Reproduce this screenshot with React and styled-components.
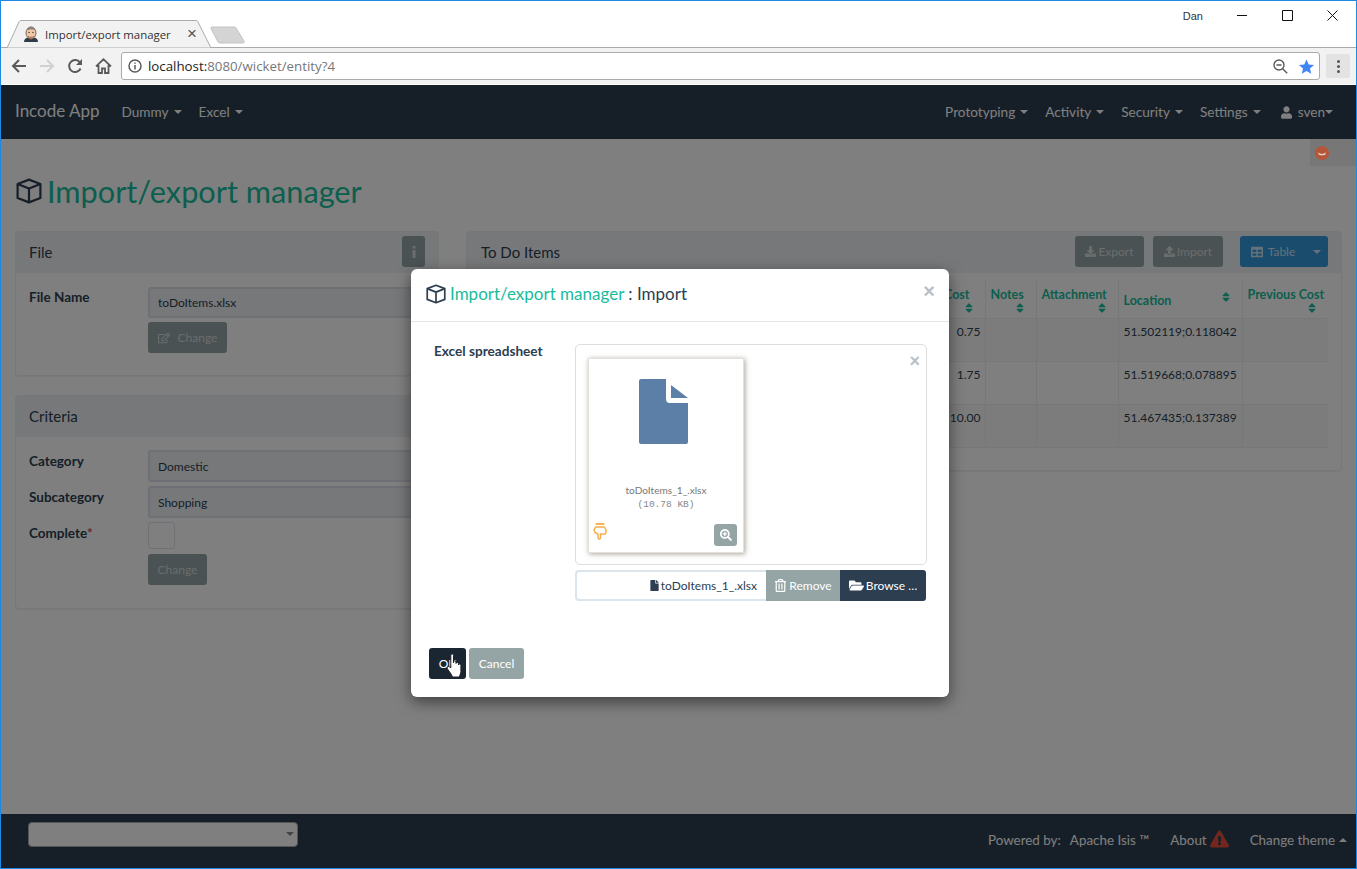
import React from "react";
import styled, { createGlobalStyle } from "styled-components";
import {
	FaDownload,
	FaExclamationTriangle,
	FaFile,
	FaFolderOpen,
	FaRegEdit,
	FaRegTrashAlt,
	FaSearchPlus,
	FaSort,
	FaTable,
	FaUpload,
	FaUser,
} from "react-icons/fa";

const GlobalStyle = createGlobalStyle`
	html, body {
		margin: 0;
		padding: 0;
		overflow: hidden;
		background: #fff;
	}
	* {
		box-sizing: border-box;
	}
`;

const Cube = ({ size = 26 }) => (
	<svg width={size} height={size} viewBox="0 0 26 26" fill="none" stroke="currentColor" strokeWidth="2.2" strokeLinejoin="round">
		<path d="M13 1.6 24.4 6v14L13 24.4 1.6 20V6z" />
		<path d="M1.6 6 13 10.6 24.4 6M13 10.6v13.8" />
	</svg>
);

const Favicon = () => (
	<svg width="16" height="17" viewBox="0 0 16 17">
		<path d="M1 16c0-3 2-4 4-4.500h6c2 .5 4 1.500 4 4.500z" fill="#2f3a4a" />
		<path d="M6.500 12.500 8 14l1.500-1.500L8 12z" fill="#c0392b" />
		<ellipse cx="8" cy="7" rx="5" ry="6" fill="#f0c9a8" stroke="#6b4a35" strokeWidth=".8" />
		<path d="M3.500 5C4 2 6 .8 8 .8s4 1.200 4.500 4C11 3 5 3 3.500 5z" fill="#8b8178" />
		<path d="M5 10.500c2 1.200 4 1.200 6 0" stroke="#6b4a35" fill="none" strokeWidth=".8" />
		<circle cx="6" cy="6.500" r=".7" fill="#333" />
		<circle cx="10" cy="6.500" r=".7" fill="#333" />
	</svg>
);

const ArrowLeft = ({ color }) => (
	<svg width="16" height="16" viewBox="0 0 16 16" fill="none" stroke={color} strokeWidth="2">
		<path d="M15 8H2M8 2 2 8l6 6" />
	</svg>
);

const ArrowRight = ({ color }) => (
	<svg width="16" height="16" viewBox="0 0 16 16" fill="none" stroke={color} strokeWidth="2">
		<path d="M1 8h13M8 2l6 6-6 6" />
	</svg>
);

const Reload = () => (
	<svg width="16" height="16" viewBox="0 0 16 16" fill="none" stroke="#5a5a5a" strokeWidth="2">
		<path d="M13.600 10.500A6 6 0 1 1 13 4.500" />
		<path d="M15 1v6H9z" fill="#5a5a5a" stroke="none" />
	</svg>
);

const Home = () => (
	<svg width="17" height="16" viewBox="0 0 17 16" fill="none" stroke="#5a5a5a" strokeWidth="1.800">
		<path d="M1 8.300 8.500 1.300 16 8.300M3.500 7v8h3.500v-4.500h3V15h3.500V7" />
	</svg>
);

const InfoCircle = () => (
	<svg width="14" height="14" viewBox="0 0 14 14" fill="none" stroke="#5a5a5a" strokeWidth="1.500">
		<circle cx="7" cy="7" r="6" />
		<path d="M7 6v4.500M7 3.400v1.400" />
	</svg>
);

const ZoomOut = () => (
	<svg width="15" height="15" viewBox="0 0 15 15" fill="none" stroke="#5a5a5a" strokeWidth="1.400">
		<circle cx="6" cy="6" r="5" />
		<path d="M3.500 6h5M9.700 9.700l4.500 4.500" />
	</svg>
);

const Star = () => (
	<svg width="15" height="15" viewBox="0 0 15 15">
		<path d="M7.500.4 9.700 5.400l5.300.5-4 3.600 1.200 5.300-4.700-2.800-4.700 2.800L4 9.500 0 5.900l5.300-.5z" fill="#4285f4" />
	</svg>
);

const HandCursor = () => (
	<svg width="18" height="25" viewBox="0 0 18 25">
		<path
			d="M4.800 15V2.500c0-2 2.700-2 2.700 0V10V9c0-1.500 2.500-1.500 2.500 0v1.500c0-1.500 2.500-1.500 2.500 0V12c0-1.300 2.400-1.300 2.400.5v6c0 2-1 3-1.500 5.500H6.500C5.500 21 3.500 19 1.500 16c-1.200-2 1-3.500 2.300-2z"
			fill="#fff"
			stroke="#222"
			strokeWidth="1"
		/>
	</svg>
);

const BigFile = () => (
	<svg width="49" height="65" viewBox="0 0 49 65">
		<path d="M2 0h25v20a4 4 0 0 0 4 4h18v39a2 2 0 0 1-2 2H2a2 2 0 0 1-2-2V2a2 2 0 0 1 2-2z" fill="#5b7fa6" />
		<path d="M32 6 49 19H32z" fill="#5b7fa6" />
	</svg>
);

const PointDown = () => (
	<svg width="14" height="17" viewBox="0 0 14 17" fill="none" stroke="#f5ae4a" strokeWidth="1.500" strokeLinejoin="round">
		<path d="M2.500 1h9" strokeWidth="1.800" />
		<path d="M2.500 4h9l1.500 3v2.500c0 1-.8 1.500-1.500 1.500H7.500v4c0 1.300-2.500 1.300-2.500 0v-4L2 9.500 1 7z" />
	</svg>
);

const Frame = styled.div`
	position: relative;
	display: flex;
	flex-direction: column;
	height: 100vh;
	border: 1px solid #1e88e5;
	overflow: hidden;
	font-family: "Lato", "Liberation Sans", sans-serif;
	font-size: 15px;
	color: #2c3e50;
`;

const TitleBar = styled.div`
	display: flex;
	align-items: flex-end;
	height: 46px;
	padding-left: 6px;
	background: #fff;
`;

const Tab = styled.div`
	position: relative;
	display: flex;
	align-items: center;
	width: 205px;
	height: 28px;
	margin-bottom: -1px;
	padding: 0 0 0 16px;
	gap: 6px;
	font-family: "Open Sans", "Liberation Sans", sans-serif;
	font-size: 11.4px;
	color: #333;
	z-index: 1;
`;

const TabShape = styled.svg`
	position: absolute;
	left: 0;
	top: 0;
	z-index: -1;
`;

const TabClose = styled.span`
	position: absolute;
	right: 15px;
	top: 5px;
	font-family: "Liberation Sans", sans-serif;
	font-size: 17px;
	line-height: 17px;
	color: #555;
`;

const NewTab = styled.svg`
	margin: 0 0 3px -2px;
`;

const Spacer = styled.div`
	flex: 1;
`;

const WindowControls = styled.div`
	display: flex;
	align-self: flex-start;
	align-items: center;
	height: 29px;
	padding-right: 18px;
	gap: 34px;
`;

const UserName = styled.span`
	font-family: "Liberation Sans", sans-serif;
	font-size: 11px;
	color: #333;
`;

const Toolbar = styled.div`
	display: flex;
	align-items: center;
	height: 38px;
	padding: 0 6px 0 4px;
	background: #f2f2f2;
	border-top: 1px solid #aaa;
	border-bottom: 1px solid #fff;
`;

const NavIcon = styled.span`
	display: flex;
	justify-content: center;
	width: 28px;
`;

const Omnibox = styled.div`
	display: flex;
	flex: 1;
	align-items: center;
	height: 28px;
	margin-left: 4px;
	padding: 0 5px 0 6px;
	gap: 6px;
	background: #fff;
	border: 1px solid #aaa;
	border-radius: 3px;
	font-family: "Open Sans", "Liberation Sans", sans-serif;
	font-size: 13.3px;
`;

const Host = styled.span`
	color: #222;
`;

const UrlRest = styled.span`
	margin-left: -6px;
	color: #777;
`;

const OmniActions = styled.span`
	display: flex;
	align-items: center;
	gap: 11px;
`;

const Kebab = styled.div`
	display: flex;
	flex-direction: column;
	align-items: center;
	justify-content: center;
	width: 24px;
	height: 24px;
	margin-left: 6px;
	gap: 2px;
	background: #e3e3e3;
	border-radius: 2px;
`;

const Dot = styled.i`
	width: 3px;
	height: 3px;
	border-radius: 50%;
	background: #555;
`;

const Navbar = styled.nav`
	display: flex;
	align-items: center;
	height: 54px;
	padding: 0 22px 0 14px;
	background: #2c3e50;
	color: #fff;
`;

const Brand = styled.span`
	margin: -4px 22px 0 0;
	font-size: 17px;
`;

const NavItem = styled.span`
	display: flex;
	align-items: center;
	margin-right: ${(p) => p.$gap || 17}px;
	font-size: 13.6px;
`;

const Caret = styled.i`
	width: 0;
	height: 0;
	margin-left: ${(p) => (p.$tight ? 0 : 5)}px;
	border-top: 4px solid currentColor;
	border-left: 4px solid transparent;
	border-right: 4px solid transparent;
`;

const CaretUp = styled(Caret)`
	margin-left: 4px;
	border-top: 0;
	border-bottom: 4px solid currentColor;
`;

const UserIcon = styled(FaUser)`
	width: 11px;
	height: 13px;
	margin-right: 6px;
`;

const Main = styled.main`
	position: relative;
	flex: 1;
	padding: 0 14px;
	background: #fff;
`;

const Feedback = styled.div`
	position: absolute;
	right: 0;
	top: 0;
	display: flex;
	align-items: center;
	width: 46px;
	height: 27px;
	padding-left: 5px;
	background: #eee;
`;

const Smile = styled.svg`
	position: relative;
	z-index: 2;
	display: block;
`;

const PageTitle = styled.h1`
	display: flex;
	align-items: center;
	height: 92px;
	margin: 0;
	gap: 5px;
	padding-top: 12px;
	font-size: 30.7px;
	font-weight: 400;
	color: #18bc9c;
`;

const TitleIcon = styled.span`
	display: flex;
	margin-left: 1px;
	color: #2c3e50;
`;

const Columns = styled.div`
	display: grid;
	grid-template-columns: 424px 876px;
	gap: 27px;
	align-items: start;
`;

const Stack = styled.div`
	display: flex;
	flex-direction: column;
	gap: 19px;
`;

const Panel = styled.section`
	background: #fff;
	border: 1px solid #ecf0f1;
	border-radius: 4px;
	box-shadow: 0 1px 1px rgba(0, 0, 0, 0.05);
`;

const PanelHead = styled.header`
	display: flex;
	align-items: center;
	justify-content: space-between;
	height: 41px;
	padding: 0 13px 2px ${(p) => p.$left || 13}px;
	background: #eef1f4;
	font-size: 15px;
`;

const PanelBody = styled.div`
	display: grid;
	grid-template-columns: 119px 1fr;
	row-gap: 4px;
	padding: ${(p) => p.$top}px 0 ${(p) => p.$bottom}px 13px;
`;

const Label = styled.label`
	padding-top: ${(p) => p.$top ?? 3}px;
	font-size: 13.5px;
	font-weight: 700;
`;

const Required = styled.span`
	color: #e74c3c;
`;

const Input = styled.div`
	display: flex;
	align-items: center;
	height: ${(p) => p.$h}px;
	padding-left: 8px;
	background: #ecf0f5;
	border: 2px solid #dce1ec;
	border-radius: 3px;
	font-size: 12px;
`;

const Checkbox = styled.div`
	width: 27px;
	height: 27px;
	background: #fff;
	border: 1px solid #dce4ec;
	border-radius: 3px;
`;

const Button = styled.button`
	display: inline-flex;
	align-items: center;
	justify-content: center;
	height: ${(p) => p.$h || 31}px;
	width: ${(p) => p.$w}px;
	margin-top: ${(p) => p.$mt || 0}px;
	padding: 0;
	gap: ${(p) => p.$gap ?? 2}px;
	background: ${(p) => p.$bg || "#95a5a6"};
	border: 0;
	border-radius: 3px;
	font-family: inherit;
	font-size: 12px;
	color: #fff;
`;

const Muted = styled.span`
	color: rgba(255, 255, 255, ${(p) => p.$alpha || 0.6});
	display: inline-flex;
	align-items: center;
	gap: ${(p) => p.$gap ?? 2}px;
`;

const HeadActions = styled.div`
	display: flex;
	align-items: center;
	gap: 9px;
`;

const TableGroup = styled.div`
	display: flex;
	margin-left: 8px;
`;

const TableButton = styled(Button)`
	border-radius: 3px 0 0 3px;
`;

const TableCaret = styled(Button)`
	border-radius: 0 3px 3px 0;
`;

const Table = styled.table`
	width: 847px;
	margin: 8px 0 22px 14px;
	table-layout: fixed;
	border-collapse: collapse;
	font-size: 12px;
`;

const Th = styled.th`
	height: 37px;
	padding: 7px ${(p) => p.$pad || 5}px 0 5px;
	border-left: 1px solid #ecf0f1;
	border-bottom: 1px solid #ecf0f1;
	color: #18bc9c;
	font-size: 12.5px;
	font-weight: 700;
	line-height: 13px;
	white-space: nowrap;
	text-align: ${(p) => (p.$right ? "right" : "left")};
	vertical-align: top;
	&:first-child {
		border-left: 0;
	}
`;

const SortIcon = styled(FaSort)`
	display: block;
	width: 10px;
	height: 12px;
	margin: 1px ${(p) => p.$right || 0}px 0 auto;
`;

const LocationHead = styled.div`
	display: flex;
	justify-content: space-between;
	padding-right: 6px;
	margin-top: 2px;
`;

const LocationText = styled.span`
	margin-top: 4px;
`;

const Row = styled.tr`
	background: ${(p) => (p.$odd ? "#f9f9f9" : "transparent")};
`;

const Td = styled.td`
	height: 43px;
	padding: 5px 4px 0 5px;
	border-left: 1px solid #ecf0f1;
	border-bottom: 1px solid #ecf0f1;
	text-align: ${(p) => (p.$num ? "right" : "left")};
	vertical-align: top;
	&:first-child {
		border-left: 0;
	}
`;

const Footer = styled.footer`
	display: flex;
	align-items: center;
	height: 54px;
	padding: 0 9px 2px 27px;
	background: #2c3e50;
	color: #fff;
	font-size: 13.4px;
`;

const ThemeSelect = styled.div`
	position: relative;
	width: 270px;
	height: 25px;
	margin-top: -11px;
	background: #fff;
	border: 1px solid #aaa;
	border-radius: 4px;
`;

const SelectArrow = styled(Caret)`
	position: absolute;
	right: 3px;
	top: 9px;
	color: #888;
`;

const FooterText = styled.span`
	display: flex;
	align-items: center;
	margin-left: ${(p) => p.$gap || 0}px;
`;

const WarnIcon = styled(FaExclamationTriangle)`
	width: 19px;
	height: 18px;
	margin: -3px 0 0 3px;
	color: #e74c3c;
`;

const Backdrop = styled.div`
	position: absolute;
	left: 0;
	right: 0;
	top: 84px;
	bottom: 0;
	background: rgba(0, 0, 0, 0.5);
`;

const Modal = styled.div`
	position: absolute;
	left: 410px;
	top: 268px;
	width: 538px;
	height: 428px;
	background: #fff;
	border-radius: 6px;
	box-shadow: 0 5px 15px rgba(0, 0, 0, 0.5);
`;

const ModalHead = styled.div`
	position: relative;
	display: flex;
	align-items: center;
	height: 53px;
	padding: 0 15px 3px;
	gap: 4px;
	border-bottom: 1px solid #e5e5e5;
	font-size: 17px;
`;

const ModalTitleLink = styled.span`
	color: #18bc9c;
`;

const CloseMark = styled.span`
	position: absolute;
	right: ${(p) => p.$right}px;
	top: ${(p) => p.$top}px;
	font-family: "Liberation Sans", sans-serif;
	font-size: ${(p) => p.$size || 20}px;
	font-weight: 700;
	line-height: 1;
	color: #b9bfc5;
`;

const ModalBody = styled.div`
	display: grid;
	grid-template-columns: 141px 352px;
	padding: 22px 0 0 23px;
`;

const FieldLabel = styled.div`
	font-size: 13.6px;
	font-weight: 700;
	line-height: 15px;
`;

const PreviewBox = styled.div`
	position: relative;
	height: 221px;
	padding: 13px 12px;
	border: 1px solid #ddd;
	border-radius: 5px;
`;

const Thumb = styled.div`
	position: relative;
	display: flex;
	flex-direction: column;
	align-items: center;
	width: 156px;
	height: 195px;
	padding-top: 20px;
	background: #fff;
	border: 1px solid #e4e0dc;
	box-shadow: 1px 1px 5px rgba(100, 85, 70, 0.55);
`;

const FileShape = styled.div`
	display: flex;
	margin-right: 6px;
`;

const ThumbName = styled.div`
	margin-top: 39px;
	font-size: 10.1px;
	line-height: 14px;
	color: #777;
`;

const ThumbSize = styled.div`
	margin-top: 1px;
	font-family: "Liberation Mono", monospace;
	font-size: 9.5px;
	line-height: 14px;
	color: #888;
`;

const DragHand = styled.span`
	position: absolute;
	left: 4px;
	top: 164px;
	display: flex;
`;

const ZoomButton = styled.span`
	position: absolute;
	right: 6px;
	bottom: 6px;
	display: flex;
	align-items: center;
	justify-content: center;
	width: 23px;
	height: 22px;
	background: #95a5a6;
	border-radius: 3px;
	color: #fff;
	font-size: 12px;
`;

const Caption = styled.div`
	display: flex;
	width: 351px;
	height: 31px;
	margin-top: 5px;
`;

const CaptionName = styled.div`
	display: flex;
	flex: 1;
	align-items: center;
	justify-content: flex-end;
	padding-right: 9px;
	gap: 1px;
	border: 2px solid #dce4ec;
	border-right: 0;
	border-radius: 4px 0 0 4px;
	font-size: 12px;
`;

const RemoveButton = styled(Button)`
	border-radius: 0;
`;

const BrowseButton = styled(Button)`
	border-radius: 0 3px 3px 0;
`;

const ModalFooter = styled.div`
	position: relative;
	display: flex;
	gap: 3px;
	margin: 47px 0 0 18px;
`;

const Cursor = styled.span`
	position: absolute;
	left: 17px;
	top: 5px;
	line-height: 0;
`;

const widths = [504, 51, 82, 124, 86];

const rows = [
	{ cost: "0.75", location: "51.502119;0.118042", odd: true },
	{ cost: "1.75", location: "51.519668;0.078895", odd: false },
	{ cost: "10.00", location: "51.467435;0.137389", odd: true },
];

const App = () => (
	<Frame>
		<GlobalStyle />
		<TitleBar>
			<Tab>
				<TabShape width="205" height="28" viewBox="0 0 205 28">
					<path d="M0 28 12 2c.5-1 1-1.500 2-1.500h175c1 0 1.500.5 2 1.500l13 26z" fill="#f2f2f2" stroke="#aaa" />
				</TabShape>
				<Favicon />
				<span>Import/export manager</span>
				<TabClose>×</TabClose>
			</Tab>
			<NewTab width="36" height="18" viewBox="0 0 36 18">
				<path d="M2 1h22c1 0 1.500.5 2 1l8 13c.5 1 0 2-1 2H10c-1 0-1.500-.5-2-1L1 2.500C.5 1.500 1 1 2 1z" fill="#d4d4d4" stroke="#c4c4c4" />
			</NewTab>
			<Spacer />
			<WindowControls>
				<UserName>Dan</UserName>
				<svg width="11" height="11" viewBox="0 0 11 11"><path d="M0 5.500h10" stroke="#111" /></svg>
				<svg width="11" height="11" viewBox="0 0 11 11" fill="none"><path d="M.5.5h10v10H.5z" stroke="#111" /></svg>
				<svg width="11" height="11" viewBox="0 0 11 11"><path d="M.5.5l10 10M10.500.5l-10 10" stroke="#111" /></svg>
			</WindowControls>
		</TitleBar>
		<Toolbar>
			<NavIcon><ArrowLeft color="#5a5a5a" /></NavIcon>
			<NavIcon><ArrowRight color="#d0d0d0" /></NavIcon>
			<NavIcon><Reload /></NavIcon>
			<NavIcon><Home /></NavIcon>
			<Omnibox>
				<InfoCircle />
				<Host>localhost:</Host>
				<UrlRest>8080/wicket/entity?4</UrlRest>
				<Spacer />
				<OmniActions>
					<ZoomOut />
					<Star />
				</OmniActions>
			</Omnibox>
			<Kebab>
				<Dot />
				<Dot />
				<Dot />
			</Kebab>
		</Toolbar>
		<Navbar>
			<Brand>Incode App</Brand>
			<NavItem>Dummy <Caret /></NavItem>
			<NavItem>Excel <Caret /></NavItem>
			<Spacer />
			<NavItem>Prototyping <Caret /></NavItem>
			<NavItem>Activity <Caret /></NavItem>
			<NavItem>Security <Caret /></NavItem>
			<NavItem $gap={20}>Settings <Caret /></NavItem>
			<NavItem $gap={1}><UserIcon />sven<Caret $tight /></NavItem>
		</Navbar>
		<Main>
			<Feedback>
				<Smile width="14" height="14" viewBox="0 0 14 14">
					<circle cx="7" cy="7" r="7" fill="#b5553a" />
					<path d="M3.500 6c.5 2.500 6.500 2.500 7 0v2.500c-1 1-6 1-7 0z" fill="#e8d5cc" />
				</Smile>
			</Feedback>
			<PageTitle>
				<TitleIcon><Cube /></TitleIcon>
				Import/export manager
			</PageTitle>
			<Columns>
				<Stack>
					<Panel>
						<PanelHead>
							File
							<Button $w={23} $h={31} $bg="#95a5a6">
								<Muted><svg width="4" height="12" viewBox="0 0 4 12" fill="currentColor"><path d="M.5 0h3v2.500h-3zM.5 4h3v8h-3z" /></svg></Muted>
							</Button>
						</PanelHead>
						<PanelBody $top={14} $bottom={22}>
							<Label $top={2}>File Name</Label>
							<Input $h={31}>toDoItems.xlsx</Input>
							<span />
							<Button $w={79}>
								<Muted $gap={8}><FaRegEdit size={12} />Change</Muted>
							</Button>
						</PanelBody>
					</Panel>
					<Panel>
						<PanelHead>Criteria</PanelHead>
						<PanelBody $top={13} $bottom={23}>
							<Label>Category</Label>
							<Input $h={32}>Domestic</Input>
							<Label>Subcategory</Label>
							<Input $h={32}>Shopping</Input>
							<Label>Complete<Required>*</Required></Label>
							<Checkbox />
							<span />
							<Button $w={59} $mt={1}><Muted>Change</Muted></Button>
						</PanelBody>
					</Panel>
				</Stack>
				<Panel>
					<PanelHead $left={14}>
						To Do Items
						<HeadActions>
							<Button $w={69}><Muted><FaDownload size={11} />Export</Muted></Button>
							<Button $w={70}><Muted><FaUpload size={11} />Import</Muted></Button>
							<TableGroup>
								<TableButton $w={66} $bg="#3498db">
									<Muted $gap={5} $alpha={0.75}><FaTable size={12} />Table</Muted>
								</TableButton>
								<TableCaret $w={22} $bg="#3498db">
									<Muted $alpha={0.75}><Caret $tight /></Muted>
								</TableCaret>
							</TableGroup>
						</HeadActions>
					</PanelHead>
					<Table>
						<colgroup>
							{widths.map((w, i) => <col key={i} width={w} />)}
						</colgroup>
						<thead>
							<tr>
								<Th $right $pad={15}>Cost<SortIcon $right={-4} /></Th>
								<Th>Notes<SortIcon $right={6} /></Th>
								<Th>Attachment<SortIcon $right={6} /></Th>
								<Th>
									<LocationHead>
										<LocationText>Location</LocationText>
										<SortIcon />
									</LocationHead>
								</Th>
								<Th>Previous Cost<SortIcon $right={6} /></Th>
							</tr>
						</thead>
						<tbody>
							{rows.map((r) => (
								<Row key={r.location} $odd={r.odd}>
									<Td $num>{r.cost}</Td>
									<Td />
									<Td />
									<Td>{r.location}</Td>
									<Td />
								</Row>
							))}
						</tbody>
					</Table>
				</Panel>
			</Columns>
		</Main>
		<Footer>
			<ThemeSelect><SelectArrow /></ThemeSelect>
			<Spacer />
			<FooterText>Powered by:</FooterText>
			<FooterText $gap={9}>Apache Isis ™</FooterText>
			<FooterText $gap={21}>About<WarnIcon /></FooterText>
			<FooterText $gap={21}>Change theme<CaretUp /></FooterText>
		</Footer>
		<Backdrop />
		<Modal>
			<ModalHead>
				<Cube size={20} />
				<ModalTitleLink>Import/export manager</ModalTitleLink>
				<span>: Import</span>
				<CloseMark $right={14} $top={12}>×</CloseMark>
			</ModalHead>
			<ModalBody>
				<FieldLabel>Excel spreadsheet</FieldLabel>
				<div>
					<PreviewBox>
						<CloseMark $right={6} $top={7} $size={18}>×</CloseMark>
						<Thumb>
							<FileShape><BigFile /></FileShape>
							<ThumbName>toDoItems_1_.xlsx</ThumbName>
							<ThumbSize>(10.78 KB)</ThumbSize>
							<DragHand><PointDown /></DragHand>
							<ZoomButton><FaSearchPlus /></ZoomButton>
						</Thumb>
					</PreviewBox>
					<Caption>
						<CaptionName><FaFile size={11} color="#2c3e50" />toDoItems_1_.xlsx</CaptionName>
						<RemoveButton $w={74} $gap={2}><FaRegTrashAlt size={13} />Remove</RemoveButton>
						<BrowseButton $w={86} $bg="#2c3e50"><FaFolderOpen size={15} />Browse …</BrowseButton>
					</Caption>
				</div>
			</ModalBody>
			<ModalFooter>
				<Button $w={37} $bg="#1a2632">OK</Button>
				<Button $w={55}>Cancel</Button>
				<Cursor><HandCursor /></Cursor>
			</ModalFooter>
		</Modal>
	</Frame>
);

export default App;
